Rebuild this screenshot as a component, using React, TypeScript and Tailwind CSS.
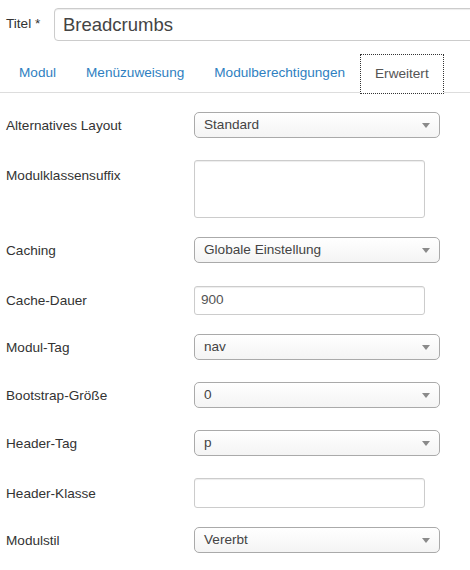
import React from "react";

const font = { fontFamily: '"Liberation Sans", Arial, sans-serif' };

function Arrow() {
  return (
    <svg width="8" height="5" viewBox="0 0 8 5" className="shrink-0">
      <path d="M0 0 L8 0 L4 5 Z" fill="#8a8a8a" />
    </svg>
  );
}

function Select({ value }: { value: string }) {
  return (
    <div className="flex h-[26px] w-[246px] items-center justify-between rounded-[5px] border border-[#aaaaaa] bg-gradient-to-b from-white to-[#f4f4f4] pl-[9px] pr-[9px] text-[13.6px] text-[#444]">
      <span>{value}</span>
      <Arrow />
    </div>
  );
}

function Input({ value, h = "h-[29px]" }: { value?: string; h?: string }) {
  return (
    <div
      className={`flex ${h} w-[231px] items-center rounded-[3px] border border-[#cccccc] bg-white pl-[6px] text-[13.6px] text-[#555] shadow-[inset_0_1px_1px_rgba(0,0,0,0.075)]`}
    >
      {value}
    </div>
  );
}

function Textarea() {
  return (
    <div className="h-[58px] w-[231px] rounded-[3px] border border-[#cccccc] bg-white shadow-[inset_0_1px_1px_rgba(0,0,0,0.075)]" />
  );
}

function Row({
  label,
  children,
  mb,
  top,
}: {
  label: string;
  children: React.ReactNode;
  mb: string;
  top?: boolean;
}) {
  return (
    <div className={`flex ${top ? "items-start" : "items-center"} ${mb}`}>
      <div className={`w-[194px] shrink-0 pl-[6px] text-[13.6px] text-[#333] ${top ? "pt-[6px]" : "pt-[2px]"}`}>
        {label}
      </div>
      {children}
    </div>
  );
}

export default function App() {
  return (
    <div className="h-[570px] w-[470px] overflow-hidden bg-white" style={font}>
      {/* Title */}
      <div className="flex items-center pt-[8px]">
        <div className="w-[54px] shrink-0 pl-[6px] text-[13.6px] text-[#333]">Titel *</div>
        <div className="flex h-[33px] w-[430px] shrink-0 items-center rounded-l-[4px] border border-[#cccccc] pl-[8px] text-[18.5px] text-[#444] shadow-[inset_0_1px_1px_rgba(0,0,0,0.075)]">
          Breadcrumbs
        </div>
      </div>

      {/* Tabs */}
      <div className="mt-[13px] flex h-[39px] items-stretch border-b border-[#dddddd] pl-[4px] text-[13.6px]">
        <div className="flex items-center border border-transparent px-[14px] text-[#2f7fc1]">Modul</div>
        <div className="flex items-center border border-transparent px-[14px] text-[#2f7fc1]">Menüzuweisung</div>
        <div className="flex items-center border border-transparent px-[14px] text-[#2f7fc1]">Modulberechtigungen</div>
        <div className="-mb-[2px] flex items-center border border-dotted border-[#333] bg-white px-[14px] text-[#555]">
          Erweitert
        </div>
      </div>

      {/* Form */}
      <div className="pt-[19px]">
        <Row label="Alternatives Layout" mb="mb-[22px]">
          <Select value="Standard" />
        </Row>
        <Row label="Modulklassensuffix" mb="mb-[19px]" top>
          <Textarea />
        </Row>
        <Row label="Caching" mb="mb-[23px]">
          <Select value="Globale Einstellung" />
        </Row>
        <Row label="Cache-Dauer" mb="mb-[19px]">
          <Input value="900" />
        </Row>
        <Row label="Modul-Tag" mb="mb-[22px]">
          <Select value="nav" />
        </Row>
        <Row label="Bootstrap-Größe" mb="mb-[22px]">
          <Select value="0" />
        </Row>
        <Row label="Header-Tag" mb="mb-[22px]">
          <Select value="p" />
        </Row>
        <Row label="Header-Klasse" mb="mb-[19px]">
          <Input h="h-[30px]" />
        </Row>
        <Row label="Modulstil" mb="mb-[0px]">
          <Select value="Vererbt" />
        </Row>
      </div>
    </div>
  );
}
